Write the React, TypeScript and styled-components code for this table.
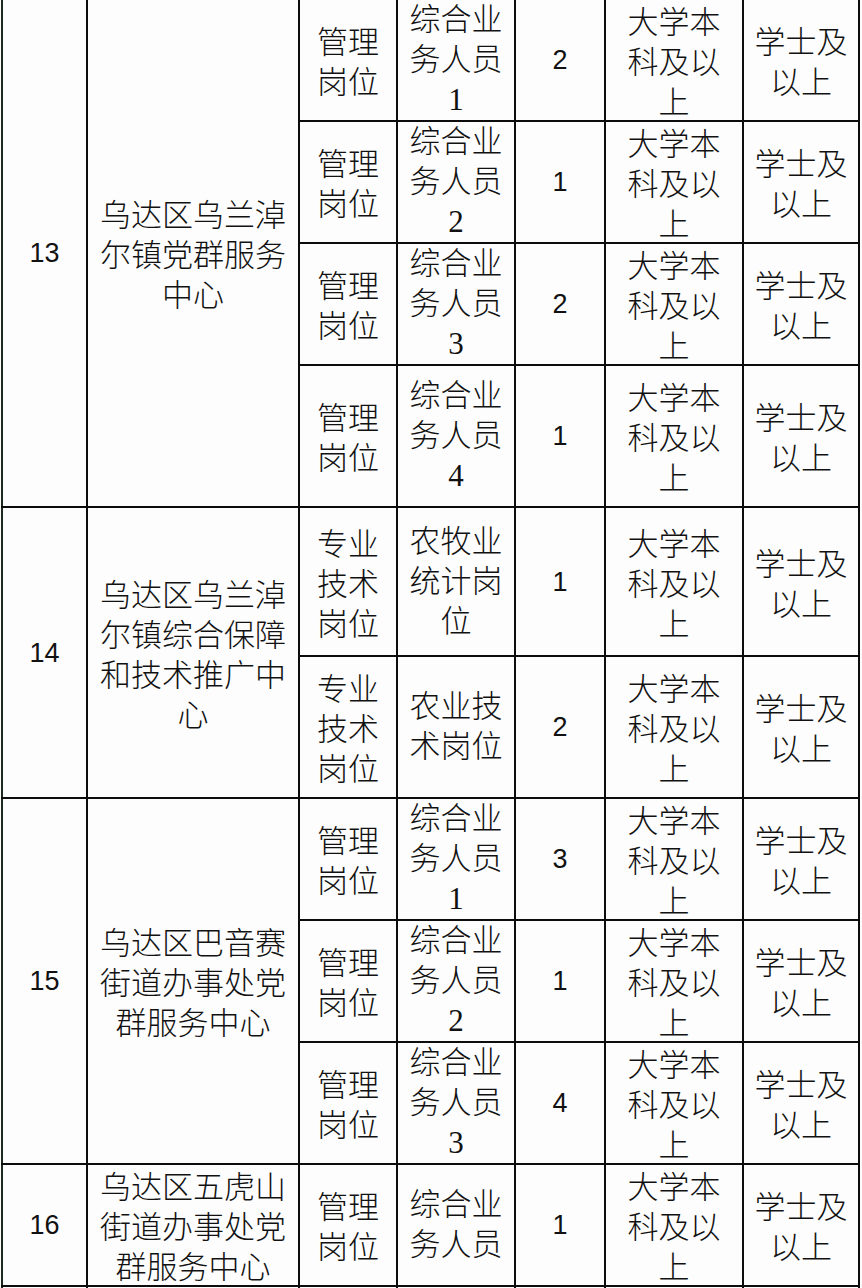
import React from "react";
import styled, { createGlobalStyle } from "styled-components";

type Post = {
  category: string[];
  name: string[];
  count: number;
  height: number;
};

type Group = {
  no: number;
  unit: string[];
  posts: Post[];
};

const EDUCATION = ["大学本", "科及以", "上"];
const DEGREE = ["学士及", "以上"];

const MANAGE = ["管理", "岗位"];
const TECH = ["专业", "技术", "岗位"];

// row pitch measured from the grid lines of the sheet
const groups: Group[] = [
  {
    no: 13,
    unit: ["乌达区乌兰淖", "尔镇党群服务", "中心"],
    posts: [
      { category: MANAGE, name: ["综合业", "务人员", "1"], count: 2, height: 121 },
      { category: MANAGE, name: ["综合业", "务人员", "2"], count: 1, height: 122 },
      { category: MANAGE, name: ["综合业", "务人员", "3"], count: 2, height: 122 },
      { category: MANAGE, name: ["综合业", "务人员", "4"], count: 1, height: 142 },
    ],
  },
  {
    no: 14,
    unit: ["乌达区乌兰淖", "尔镇综合保障", "和技术推广中", "心"],
    posts: [
      { category: TECH, name: ["农牧业", "统计岗", "位"], count: 1, height: 149 },
      { category: TECH, name: ["农业技", "术岗位"], count: 2, height: 142 },
    ],
  },
  {
    no: 15,
    unit: ["乌达区巴音赛", "街道办事处党", "群服务中心"],
    posts: [
      { category: MANAGE, name: ["综合业", "务人员", "1"], count: 3, height: 121 },
      { category: MANAGE, name: ["综合业", "务人员", "2"], count: 1, height: 122 },
      { category: MANAGE, name: ["综合业", "务人员", "3"], count: 4, height: 122 },
    ],
  },
  {
    no: 16,
    unit: ["乌达区五虎山", "街道办事处党", "群服务中心"],
    posts: [{ category: MANAGE, name: ["综合业", "务人员"], count: 1, height: 121 }],
  },
];

const columns = [85, 212, 98, 118, 90, 138, 116];

const GlobalStyle = createGlobalStyle`
  html, body {
    margin: 0;
    padding: 0;
    background: #fdfdfd;
    overflow: hidden;
  }
`;

const Page = styled.div`
  width: 862px;
  height: 1288px;
  overflow: hidden;
  background: #fdfdfd;
`;

const Sheet = styled.table`
  margin: -2px 0 0 1px;
  border-collapse: collapse;
  table-layout: fixed;
  width: 857px;
  color: #111;
`;

const Row = styled.tr<{ $h: number }>`
  height: ${(p) => p.$h}px;
`;

const Cell = styled.td<{ $kind?: "text" | "number" | "mixed" }>`
  border: 2px solid #0c0c0c;
  padding: 0;
  text-align: center;
  vertical-align: middle;
  overflow: hidden;
  font-family: ${(p) =>
    p.$kind === "number"
      ? `"Liberation Sans", Arial, sans-serif`
      : p.$kind === "mixed"
      ? `"Liberation Serif", "Noto Sans CJK SC", serif`
      : `"Noto Sans CJK SC", "Noto Sans", sans-serif`};
  font-size: ${(p) => (p.$kind === "number" ? "27px" : "31px")};
  font-weight: 300;
  line-height: 40px;

  &:first-child {
    border-left-color: #1c2a1f;
  }
`;

const Line = styled.span`
  display: block;
  white-space: nowrap;
`;

const Lines: React.FC<{ items: string[] }> = ({ items }) => (
  <>
    {items.map((t, i) => (
      <Line key={i}>{t}</Line>
    ))}
  </>
);

const App: React.FC = () => {
  return (
    <Page>
      <GlobalStyle />
      <Sheet>
        <colgroup>
          {columns.map((w, i) => (
            <col key={i} style={{ width: w }} />
          ))}
        </colgroup>
        <tbody>
          {groups.map((g) =>
            g.posts.map((p, i) => (
              <Row key={`${g.no}-${i}`} $h={p.height}>
                {i === 0 && (
                  <>
                    <Cell rowSpan={g.posts.length} $kind="number">
                      {g.no}
                    </Cell>
                    <Cell rowSpan={g.posts.length}>
                      <Lines items={g.unit} />
                    </Cell>
                  </>
                )}
                <Cell>
                  <Lines items={p.category} />
                </Cell>
                <Cell $kind="mixed">
                  <Lines items={p.name} />
                </Cell>
                <Cell $kind="number">{p.count}</Cell>
                <Cell>
                  <Lines items={EDUCATION} />
                </Cell>
                <Cell>
                  <Lines items={DEGREE} />
                </Cell>
              </Row>
            ))
          )}
          {/* next row of the sheet, cut off by the bottom edge */}
          <Row $h={60}>
            {columns.map((_, i) => (
              <Cell key={i} />
            ))}
          </Row>
        </tbody>
      </Sheet>
    </Page>
  );
};

export default App;
